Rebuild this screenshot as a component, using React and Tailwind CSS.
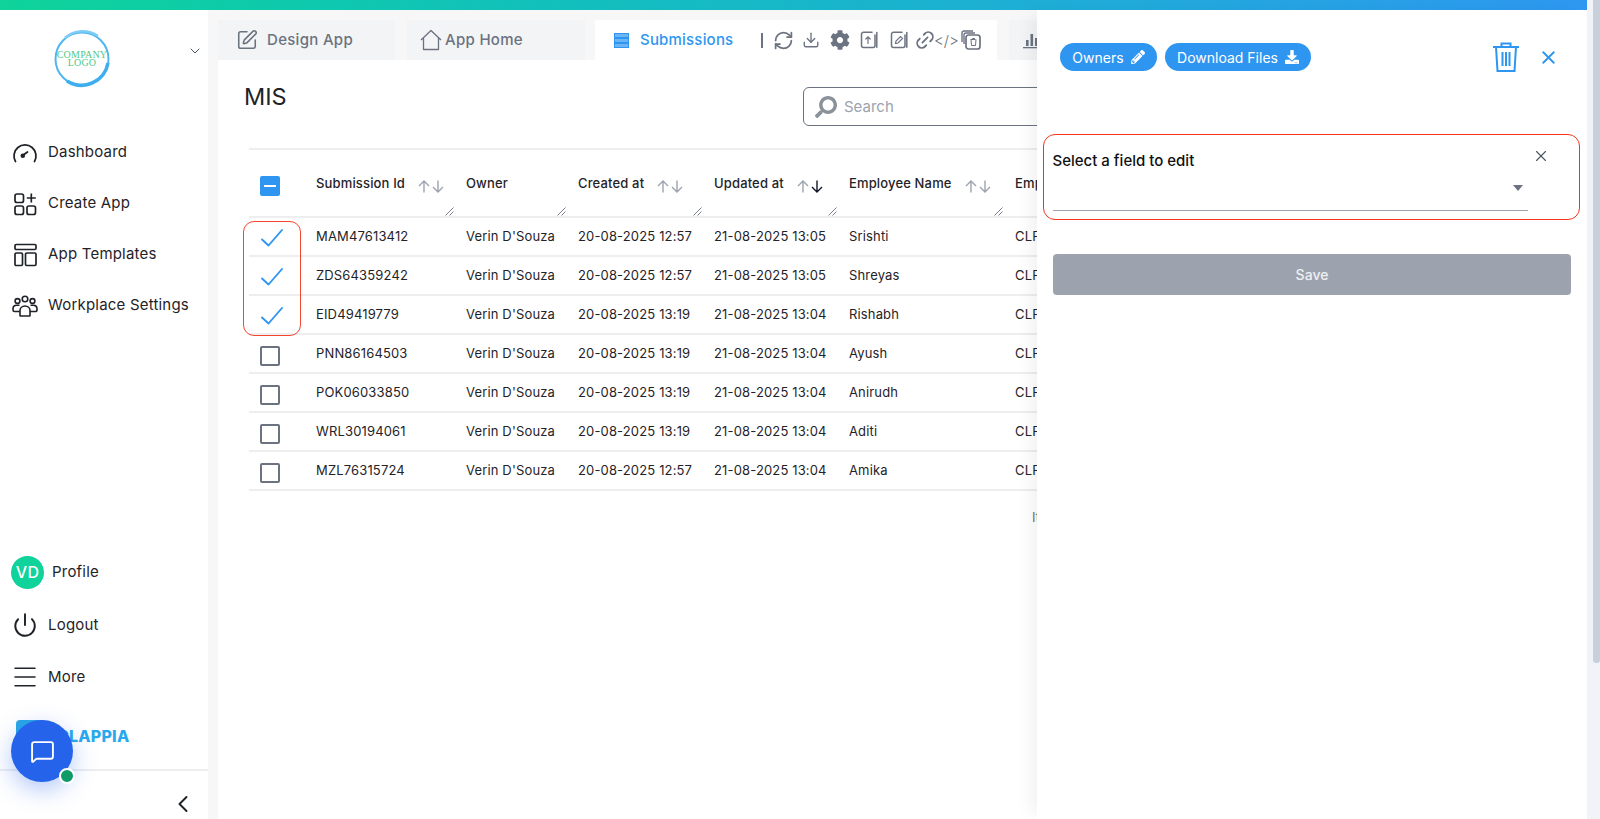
import { ChevronDown, ChevronLeft, Download, Link2, Menu, MessageSquare, Power, RefreshCw, SquarePen, X } from 'lucide-react';
import { FaCog, FaDownload, FaPencilAlt, FaSearch } from 'react-icons/fa';

const navItems = [
  { label: 'Dashboard', icon: <GaugeIcon /> },
  { label: 'Create App', icon: <CreateIcon /> },
  { label: 'App Templates', icon: <TemplatesIcon /> },
  { label: 'Workplace Settings', icon: <PeopleIcon /> },
];

const columns = [
  { label: 'Submission Id', width: 'w-[150px]', sort: 'none', pad: 'pr-[9px]' },
  { label: 'Owner', width: 'w-[112px]', pad: 'pr-[10px]' },
  { label: 'Created at', width: 'w-[136px]', sort: 'none', pad: 'pr-[18px]' },
  { label: 'Updated at', width: 'w-[135px]', sort: 'down', pad: 'pr-[13px]' },
  { label: 'Employee Name', width: 'w-[166px]', sort: 'none', pad: 'pr-[11px]' },
  { label: 'Employee Id', width: 'w-[170px]', pad: 'pr-[10px]' },
];

const rows = [
  ['MAM47613412', '20-08-2025 12:57', '21-08-2025 13:05', 'Srishti', true],
  ['ZDS64359242', '20-08-2025 12:57', '21-08-2025 13:05', 'Shreyas', true],
  ['EID49419779', '20-08-2025 13:19', '21-08-2025 13:04', 'Rishabh', true],
  ['PNN86164503', '20-08-2025 13:19', '21-08-2025 13:04', 'Ayush', false],
  ['POK06033850', '20-08-2025 13:19', '21-08-2025 13:04', 'Anirudh', false],
  ['WRL30194061', '20-08-2025 13:19', '21-08-2025 13:04', 'Aditi', false],
  ['MZL76315724', '20-08-2025 12:57', '21-08-2025 13:04', 'Amika', false],
];

function GaugeIcon() {
  return (
    <svg width="26" height="22" viewBox="0 0 26 22" fill="none" stroke="currentColor" strokeWidth="1.8" strokeLinecap="round">
      <path d="M3.5 19.5A11 11 0 1 1 22.5 19.5" />
      <path d="M10.5 13.5 15.5 10" />
      <circle cx="10.8" cy="13.8" r="1.4" fill="currentColor" />
    </svg>
  );
}

function CreateIcon() {
  return (
    <svg width="24" height="24" viewBox="0 0 24 24" fill="none" stroke="currentColor" strokeWidth="1.7">
      <rect x="2" y="2" width="8.5" height="8.5" rx="2" />
      <rect x="2" y="14" width="8.5" height="8.5" rx="2" />
      <rect x="14" y="14" width="8.5" height="8.5" rx="2" />
      <path d="M18.3 1.5v9M13.8 6h9" />
    </svg>
  );
}

function TemplatesIcon() {
  return (
    <svg width="24" height="24" viewBox="0 0 24 24" fill="none" stroke="currentColor" strokeWidth="1.7">
      <rect x="2" y="1.5" width="21" height="5" rx="1.2" />
      <rect x="2" y="10" width="7.5" height="12.5" rx="1.2" />
      <rect x="12.5" y="10" width="10.5" height="12.5" rx="1.2" />
    </svg>
  );
}

function PeopleIcon() {
  return (
    <svg width="26" height="22" viewBox="0 0 26 22" fill="none" stroke="currentColor" strokeWidth="1.6">
      <circle cx="13" cy="4" r="2.8" />
      <circle cx="5.5" cy="6" r="2.4" />
      <circle cx="20.5" cy="6" r="2.4" />
      <path d="M8 20.5v-5a5 4.5 0 0 1 10 0v5a1 1 0 0 1-1 .5H9a1 1 0 0 1-1-.5Z" />
      <path d="M7.5 10.2H4.5A3.5 3.5 0 0 0 1 13.5v1.5a1.5 1.5 0 0 0 1.5 1.5H8" />
      <path d="M18.5 10.2h3a3.5 3.5 0 0 1 3.5 3.3v1.5a1.5 1.5 0 0 1-1.5 1.5H18" />
    </svg>
  );
}

function HomeIcon() {
  return (
    <svg width="22" height="22" viewBox="0 0 22 22" fill="none" stroke="currentColor" strokeWidth="1.3" strokeLinejoin="round">
      <path d="M1 11 11 1.5 21 11M3.5 9v11.5h15V9" />
    </svg>
  );
}

function DocIcon({ children }) {
  return (
    <svg width="18" height="18" viewBox="0 0 18 18" fill="none" stroke="#6b7280" strokeWidth="1.5" strokeLinecap="round">
      <path d="M12 1.2H3.5a2 2 0 0 0-2 2v11.3a2 2 0 0 0 2 2h9.5a2 2 0 0 0 2-2V4" />
      <path d="M16.8 1.5v14.7" />
      {children}
    </svg>
  );
}

function TrashStackIcon() {
  return (
    <svg width="20" height="20" viewBox="0 0 20 20" fill="none" stroke="#6b7280" strokeWidth="1.4">
      <path d="M1 12V3a2 2 0 0 1 2-2h9" />
      <path d="M3 14V5a2 2 0 0 1 2-2h9" />
      <rect x="5" y="5" width="14" height="14" rx="2.5" strokeWidth="1.7" />
      <path d="M9.5 9.5h5M10 9.5l.5 6h4l.5-6M11.5 9.5V8.5h2v1" strokeWidth="1" />
    </svg>
  );
}

function BarsIcon() {
  return (
    <svg width="18" height="18" viewBox="0 0 18 18" fill="#6b7280">
      <rect x="3" y="9" width="2.6" height="6" />
      <rect x="7.5" y="3" width="2.6" height="12" />
      <rect x="12" y="7" width="2.6" height="8" />
      <rect x="0" y="16" width="18" height="1.3" />
    </svg>
  );
}

function SubmissionsIcon() {
  return (
    <svg width="15" height="15" viewBox="0 0 15 15" fill="#6bb5f5" stroke="#2e96f0" strokeWidth="1">
      <rect x="0.5" y="0.5" width="14" height="4" />
      <rect x="0.5" y="5.5" width="14" height="4" />
      <rect x="0.5" y="10.5" width="14" height="4" />
    </svg>
  );
}

function LogoMark() {
  return (
    <svg width="58" height="58" viewBox="0 0 58 58">
      <circle cx="29" cy="29" r="26.5" fill="none" stroke="#4fb7f0" strokeWidth="2" />
      <path d="M14 51A27 27 0 0 0 55 33" fill="none" stroke="#3eaeef" strokeWidth="3.5" />
      <path d="M12 8A27 27 0 0 1 45 6" fill="none" stroke="#7fcdf5" strokeWidth="2.5" />
      <text x="29" y="28" textAnchor="middle" fontFamily="Liberation Serif, serif" fontSize="10" fill="#4ec98a">COMPANY</text>
      <text x="29" y="36" textAnchor="middle" fontFamily="Liberation Serif, serif" fontSize="10" fill="#4ec98a">LOGO</text>
    </svg>
  );
}

function BlueCheck() {
  return (
    <svg className="mt-[2px] ml-[1px]" width="22" height="18" viewBox="0 0 22 18" fill="none" stroke="#2e96f0" strokeWidth="1.9" strokeLinecap="round" strokeLinejoin="round">
      <path d="M1 10.5 7.5 16.5 21 1" />
    </svg>
  );
}

function SortArrows({ mode }) {
  return (
    <span className="flex items-center gap-[2px] pt-[5px]">
      <svg width="12" height="13" viewBox="0 0 12 13" fill="none" stroke="#9ca3af" strokeWidth="1.4">
        <path d="M6 12.5V1M1 6l5-5 5 5" />
      </svg>
      <svg width="12" height="13" viewBox="0 0 12 13" fill="none" stroke={mode === 'down' ? '#111827' : '#9ca3af'} strokeWidth="1.4">
        <path d="M6 .5V12M1 7l5 5 5-5" />
      </svg>
    </span>
  );
}

function ResizeHandle() {
  return (
    <svg className="absolute right-[-1px] bottom-[0px]" width="9" height="9" viewBox="0 0 9 9" fill="none" stroke="#6b7280" strokeWidth="0.9">
      <path d="M.5 8.5 8.5.5M4.5 8.5l4-4" />
    </svg>
  );
}

const Sidebar = () => (
  <aside className="flex w-[208px] shrink-0 flex-col bg-white text-[15px] tracking-[0.2px] text-[#1f2328]">
    <div className="relative flex h-[117px] shrink-0 pt-[20px] pl-[53px]">
      <LogoMark />
      <ChevronDown className="absolute top-[33px] left-[187px] text-[#4b5563]" size={16} strokeWidth={1.5} />
    </div>
    <nav className="flex flex-col">
      {navItems.map((item) => (
        <div key={item.label} className="flex h-[51px] items-center">
          <span className="flex w-[48px] justify-center pl-[2px]">{item.icon}</span>
          <span>{item.label}</span>
        </div>
      ))}
    </nav>
    <div className="flex-1" />
    <div className="flex h-[54px] items-center pl-[11px]">
      <span className="flex h-[33px] w-[33px] items-center justify-center rounded-full bg-[#0fd39a] text-[16px] font-medium text-white">VD</span>
      <span className="ml-[8px]">Profile</span>
    </div>
    <div className="flex h-[52px] items-center">
      <span className="flex w-[48px] justify-center pl-[2px]">
        <Power size={26} strokeWidth={1.8} />
      </span>
      <span>Logout</span>
    </div>
    <div className="flex h-[52px] items-center">
      <span className="flex w-[48px] justify-center pl-[2px]">
        <Menu size={30} strokeWidth={1.2} />
      </span>
      <span>More</span>
    </div>
    <div className="flex h-[68px] items-start gap-[11px] border-b-2 border-[#eceef0] pt-[17px] pl-[16px]">
      <span className="h-[30px] w-[30px] rounded-[4px] bg-[#2ba6e6]" />
      <span className="pt-[8px] text-[16px] leading-[17px] font-extrabold text-[#29a8ec]">CLAPPIA</span>
    </div>
    <div className="flex h-[48px] items-center justify-end pt-[18px] pr-[11px]">
      <ChevronLeft size={28} strokeWidth={1.7} />
    </div>
  </aside>
);

const Tabs = () => (
  <div className="flex h-[50px] shrink-0 gap-[12px] overflow-hidden pt-[10px] pr-[4px] text-[15px] tracking-[0.3px] text-[#6b7280]">
    <div className="flex w-[177px] items-center gap-[9px] bg-[#f3f4f6] pl-[18px]">
      <SquarePen size={22} strokeWidth={1.7} />
      <span className="font-medium">Design App</span>
    </div>
    <div className="flex w-[178px] items-center gap-[3px] bg-[#f3f4f6] pl-[13px]">
      <HomeIcon />
      <span className="font-medium">App Home</span>
    </div>
    <div className="-ml-[2px] flex w-[402px] items-center bg-white pl-[19px]">
      <SubmissionsIcon />
      <span className="ml-[11px] w-[121px] font-medium tracking-[0.2px] text-[#2e96f0]">Submissions</span>
      <span className="h-[15px] w-[2px] bg-[#6b7280]" />
      <span className="ml-[10px] flex items-center">
        <RefreshCw size={21} strokeWidth={2} />
      </span>
      <span className="ml-[8px] flex items-center">
        <Download size={18} strokeWidth={1.8} />
      </span>
      <span className="ml-[10px] flex items-center">
        <FaCog size={20} />
      </span>
      <span className="ml-[10px] flex items-center">
        <DocIcon>
          <path d="M8 12.5V6M5.8 8 8 5.8 10.2 8" strokeWidth="1.2" />
        </DocIcon>
      </span>
      <span className="ml-[12px] flex items-center">
        <DocIcon>
          <path d="M5.5 12.5 6 10l4.5-4.5 2 2L8 12Z" strokeWidth="1.2" />
        </DocIcon>
      </span>
      <span className="ml-[6px] flex items-center">
        <Link2 className="-rotate-45" size={22} strokeWidth={2} />
      </span>
      <span className="-ml-[2px] w-[21px] text-center text-[15px] leading-none font-light tracking-normal whitespace-nowrap">&lt;/&gt;</span>
      <span className="ml-[6px] flex items-center">
        <TrashStackIcon />
      </span>
    </div>
    <div className="flex flex-1 items-center bg-[#f3f4f6] pl-[14px]">
      <BarsIcon />
    </div>
  </div>
);

const SubmissionsTable = () => (
  <table className="w-[1100px] table-fixed border-collapse text-[13px] tracking-[0.15px] text-[#1f2328]">
    <colgroup>
      <col className="w-[54px]" />
      {columns.map((col) => (
        <col key={col.label} className={col.width} />
      ))}
      <col />
    </colgroup>
    <thead>
      <tr className="h-[68px] border-t-2 border-b-2 border-[#eceef0]">
        <th className="p-0 pl-[11px] align-top">
          <span className="mt-[26px] flex h-[20px] w-[20px] items-center justify-center rounded-[2px] bg-[#2e96f0]">
            <span className="h-[2.5px] w-[12px] bg-white" />
          </span>
        </th>
        {columns.map((col) => (
          <th key={col.label} className={`relative h-[68px] p-0 pl-[13px] align-top font-medium ${col.pad}`}>
            <div className="flex justify-between pt-[25px] text-left leading-[16px] whitespace-nowrap">
              <span>{col.label}</span>
              {col.sort && <SortArrows mode={col.sort} />}
            </div>
            <ResizeHandle />
          </th>
        ))}
        <th />
      </tr>
    </thead>
    <tbody>
      {rows.map(([id, created, updated, name, checked]) => (
        <tr key={id} className="h-[39px] border-b-2 border-[#eceef0]">
          <td className="p-0 pl-[11px]">
            {checked ? (
              <BlueCheck />
            ) : (
              <span className="mt-[5px] block h-[20px] w-[20px] rounded-[2px] border-2 border-[#6b7280]" />
            )}
          </td>
          <td className="pl-[13px]">{id}</td>
          <td className="pl-[13px]">Verin D'Souza</td>
          <td className="pl-[13px] whitespace-nowrap">{created}</td>
          <td className="pl-[13px] whitespace-nowrap">{updated}</td>
          <td className="pl-[13px]">{name}</td>
          <td className="pl-[13px]">CLP</td>
          <td />
        </tr>
      ))}
    </tbody>
  </table>
);

const EditPanel = () => (
  <div className="absolute top-[10px] right-[13px] bottom-0 z-10 w-[550px] bg-white shadow-[-12px_0_16px_-6px_rgba(0,0,0,0.06)]">
    <div className="flex items-start pt-[33px] pr-[28px] pl-[23px]">
      <button type="button" className="flex h-[28px] w-[97px] items-center justify-center gap-[7px] rounded-full bg-[#2e96f0] text-[14px] text-white">
        Owners
        <FaPencilAlt size={14} />
      </button>
      <button type="button" className="ml-[8px] flex h-[28px] w-[146px] items-center justify-center gap-[7px] rounded-full bg-[#2e96f0] text-[14px] text-white">
        Download Files
        <FaDownload size={14} />
      </button>
      <svg className="mt-[-1px] ml-auto" width="28" height="30" viewBox="0 0 28 30" fill="none" stroke="#2e96f0" strokeWidth="2">
        <path d="M1 5h26M9.5 5V1.5h9V5M4 5l1.5 24h17L24 5M10.5 10v14M14 10v14M17.5 10v14" />
      </svg>
      <X className="mt-[4px] ml-[18px]" size={21} color="#2e96f0" strokeWidth={2.2} />
    </div>
    <div className="mt-[62px] ml-[6px] flex h-[86px] w-[537px] rounded-[12px] border-[1.5px] border-[#f5331c] pt-[15px] pl-[8.5px]">
      <div className="w-[475px]">
        <div className="text-[15px] leading-[21px] font-medium text-[#111]">Select a field to edit</div>
        <div className="flex h-[40px] items-start justify-end border-b border-[#9ca3af] pt-[14px] pr-[5px]">
          <span className="h-0 w-0 border-x-[5.5px] border-t-[6px] border-x-transparent border-t-[#6b7280]" />
        </div>
      </div>
      <X className="mt-[-3px] ml-[4px]" size={18} color="#4b5563" strokeWidth={1.5} />
    </div>
    <button type="button" className="mt-[34px] ml-[16px] block h-[41px] w-[518px] rounded-[4px] bg-[#9ca3af] text-center text-[14px] font-medium text-[#eef0f2]">
      Save
    </button>
  </div>
);

const App = () => {
  return (
    <div className="relative flex h-[819px] w-[1600px] flex-col overflow-hidden bg-white font-['Inter',sans-serif]">
      <div className="h-[10px] w-[1593px] shrink-0 bg-gradient-to-r from-[#0fd39a] to-[#2e96f0]" />
      <div className="flex min-h-0 flex-1">
        <Sidebar />
        <main className="relative flex min-w-0 flex-1 flex-col bg-[#f7f7f7] pl-[10px]">
          <Tabs />
          <div className="relative flex-1 overflow-hidden bg-white pt-[27px]">
            <span className="absolute top-[22px] left-[-3px] h-[33px] w-[2px] bg-[#2e96f0]" />
            <div className="flex items-start pl-[26px]">
              <h1 className="w-[559px] pt-[1px] text-[23.5px] leading-[18px] text-[#1f2328]">MIS</h1>
              <div className="flex h-[39px] w-[320px] shrink-0 items-center rounded-[6px] border border-[#6b7280] bg-white pt-[1px] pl-[11px] text-[15px] text-[#9ca3af]">
                <FaSearch className="-scale-x-100 text-[#8b9199]" size={22} />
                <span className="ml-[7px]">Search</span>
              </div>
            </div>
            <div className="relative mt-[22px] ml-[31px]">
              <SubmissionsTable />
              <div className="mt-[17px] ml-[783px] text-[13px] whitespace-nowrap text-[#6b7280]">Items per page</div>
              <span className="absolute top-[73px] left-[-6px] h-[115px] w-[58px] rounded-[11px] border-[1.5px] border-[#f5452f]" />
            </div>
          </div>
        </main>
      </div>
      <EditPanel />
      <div className="absolute top-0 right-0 bottom-0 z-20 w-[13px] bg-[#f1f3f8]">
        <div className="mt-0 ml-[6px] h-[663px] w-[7px] rounded-b-[3px] bg-[#c8d0dc]" />
      </div>
      <div className="absolute top-[720px] left-[11px] z-30 flex h-[62px] w-[62px] items-center justify-center rounded-full bg-[#2563eb] shadow-[0_8px_24px_rgba(37,99,235,0.35)]">
        <MessageSquare size={25} color="#fff" strokeWidth={1.8} />
        <span className="absolute right-[-2px] bottom-[-2px] h-[16px] w-[16px] rounded-full border-2 border-white bg-[#0f9a6a]" />
      </div>
    </div>
  );
};

export default App;
